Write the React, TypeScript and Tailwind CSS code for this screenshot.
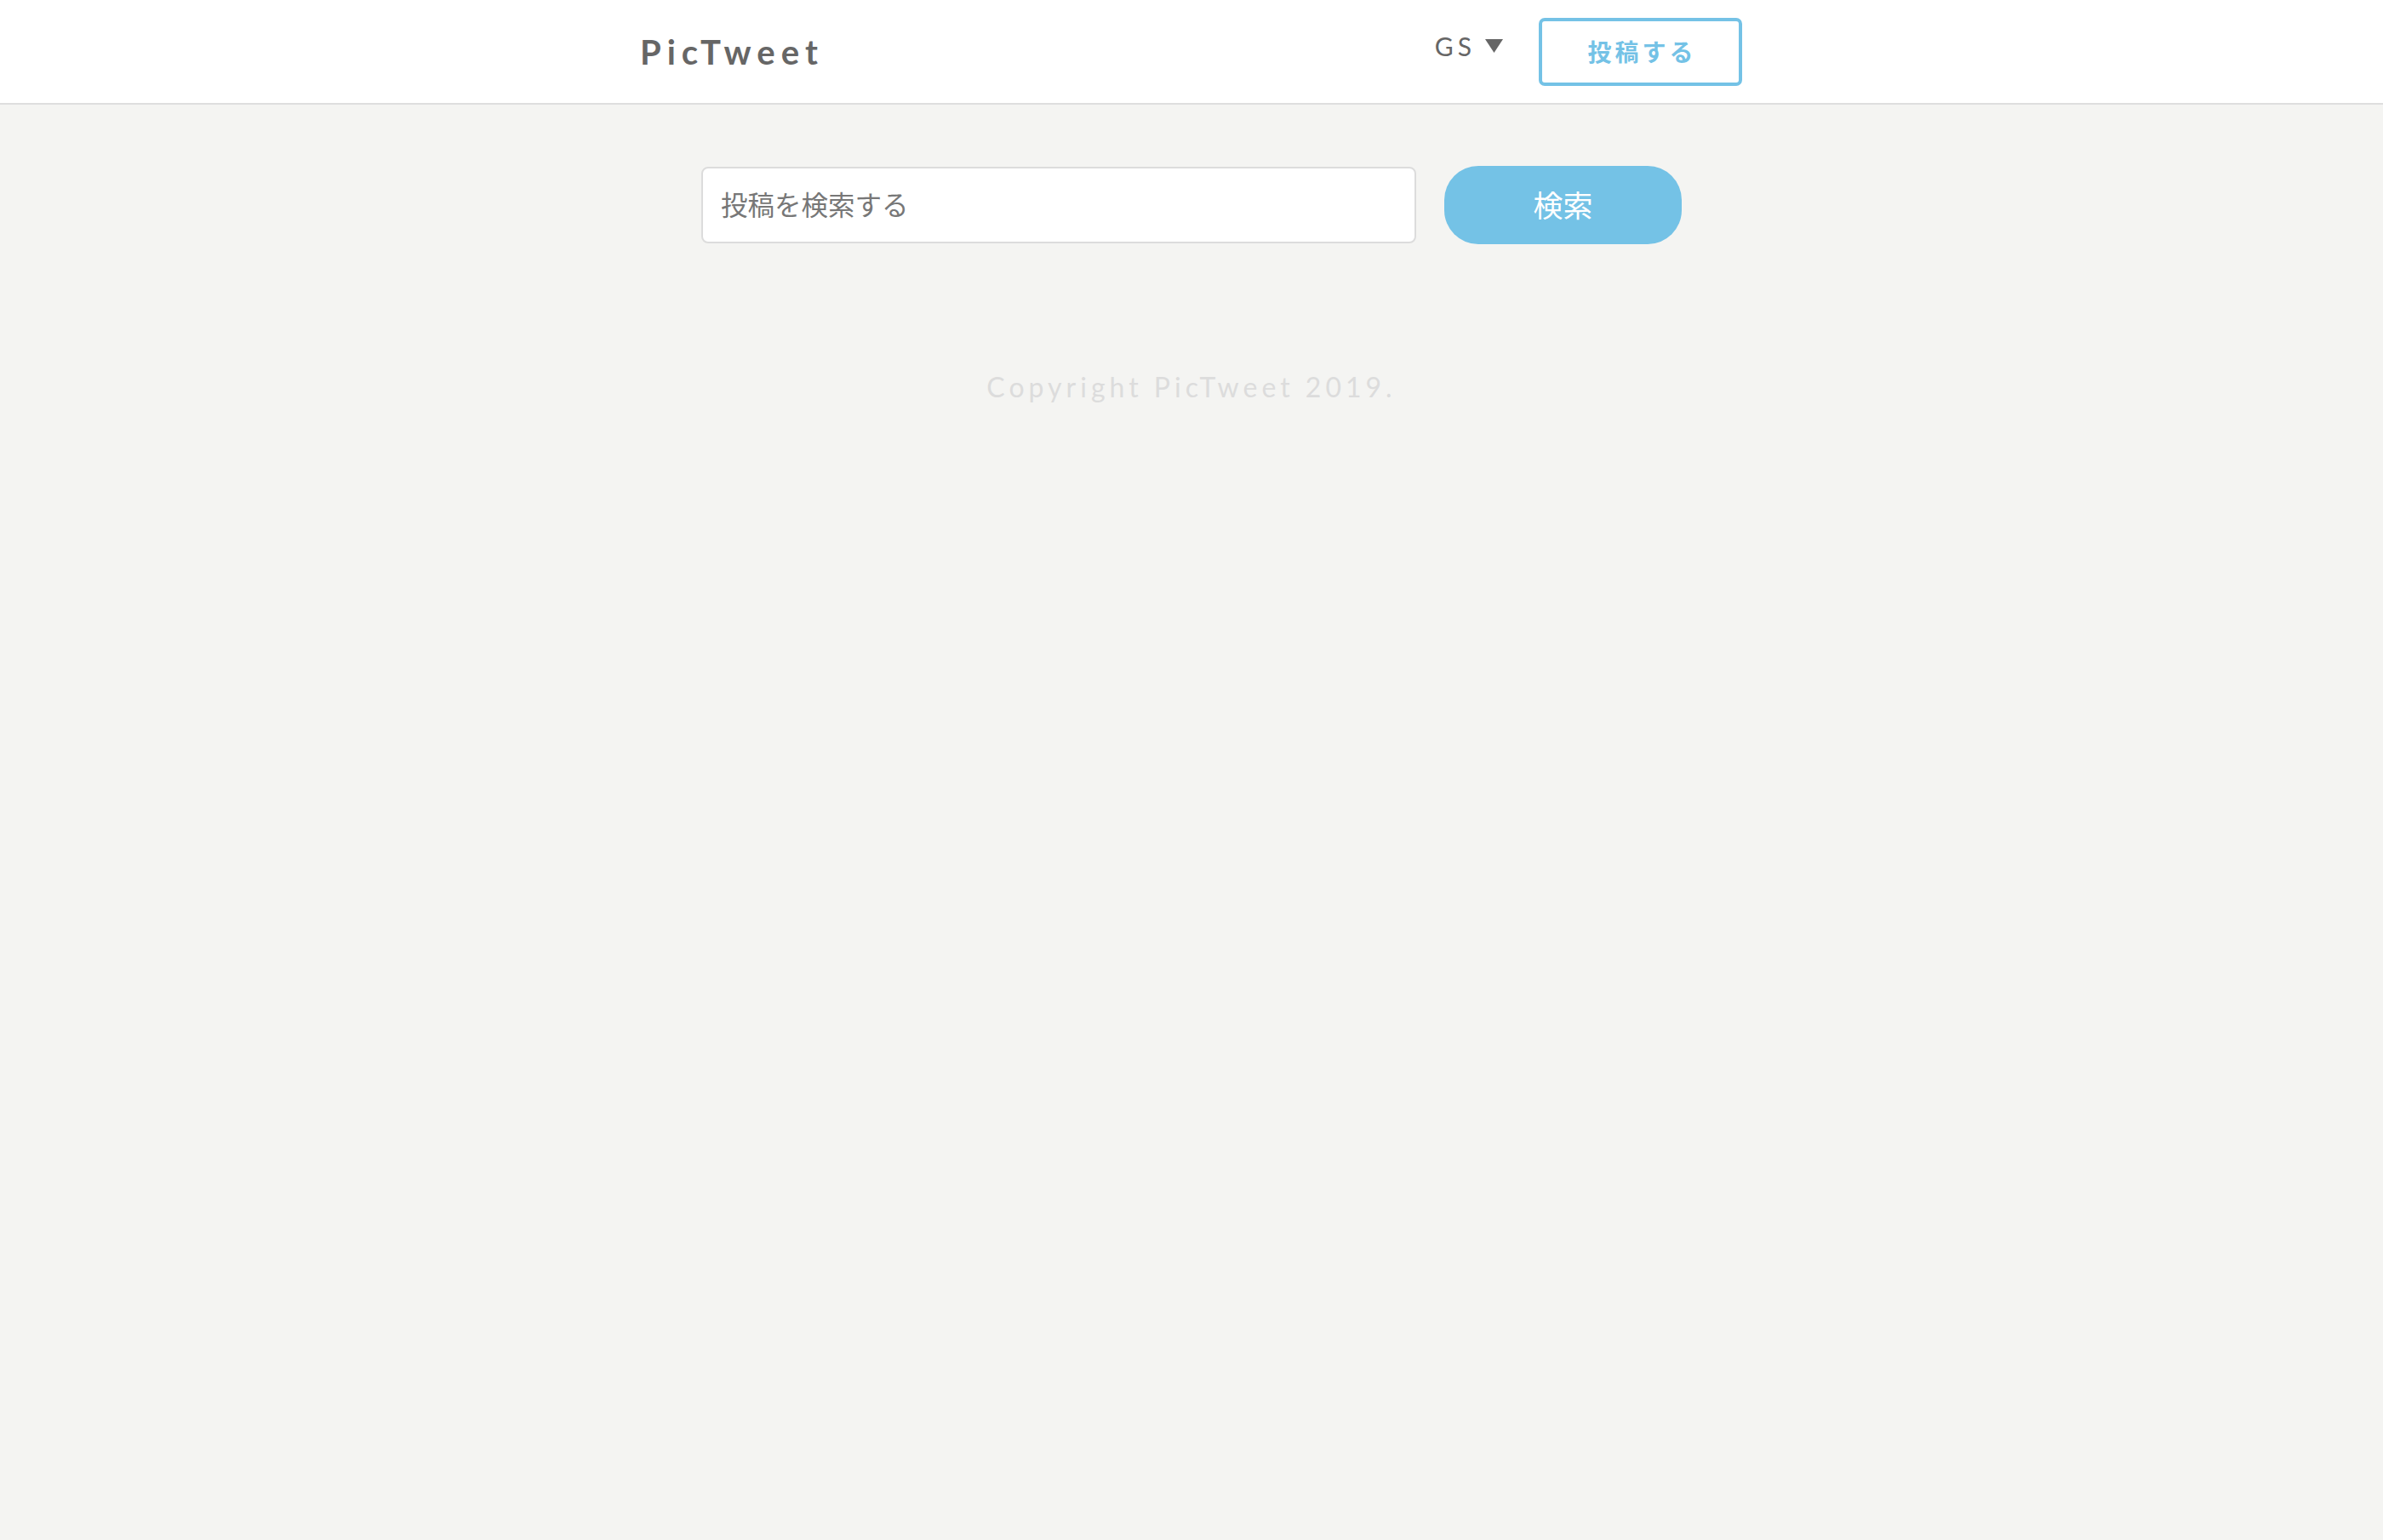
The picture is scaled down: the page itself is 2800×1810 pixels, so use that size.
import React from "react";

function Header() {
  return (
    <header className="h-[123px] bg-white border-b-2 border-[#dedede]">
      <div className="w-[1300px] h-full mx-auto flex items-center justify-between">
        <a className="ml-[2px] text-[40px] font-bold tracking-[7px] text-[#666] leading-none">
          PicTweet
        </a>
        <div className="flex items-center gap-[42px] mr-[3px]">
          <div className="flex items-center gap-[11px] mb-[14px] text-[#666]">
            <span className="text-[30px] tracking-[5px] leading-none">GS</span>
            <svg width="21" height="16" viewBox="0 0 21 16">
              <path d="M0 0 H21 L10.5 16 Z" fill="#666" />
            </svg>
          </div>
          <button className="w-[239px] h-[80px] border-4 border-[#74c2e6] rounded-[7px] bg-white text-[#74c2e6] text-[28px] font-bold tracking-[4px] pl-[4px]">
            投稿する
          </button>
        </div>
      </div>
    </header>
  );
}

function SearchForm() {
  return (
    <form className="flex items-center justify-center gap-[33px] pt-[72px]">
      <input
        type="text"
        placeholder="投稿を検索する"
        className="w-[840px] h-[90px] bg-white border-2 border-[#dcdcdc] rounded-[8px] px-[21px] text-[31.5px] text-[#666] placeholder:text-[#777] outline-none"
      />
      <button
        type="button"
        className="w-[279px] h-[92px] rounded-[40px] bg-[#74c2e6] text-white text-[35px]"
      >
        検索
      </button>
    </form>
  );
}

export default function App() {
  return (
    <div className="min-h-screen bg-[#f4f4f2] font-['Lato','Noto_Sans_CJK_JP',sans-serif]">
      <Header />
      <SearchForm />
      <footer className="pt-[144px] text-center text-[32px] leading-[48px] tracking-[5px] text-[#dcdcdc]">
        Copyright PicTweet 2019.
      </footer>
    </div>
  );
}
